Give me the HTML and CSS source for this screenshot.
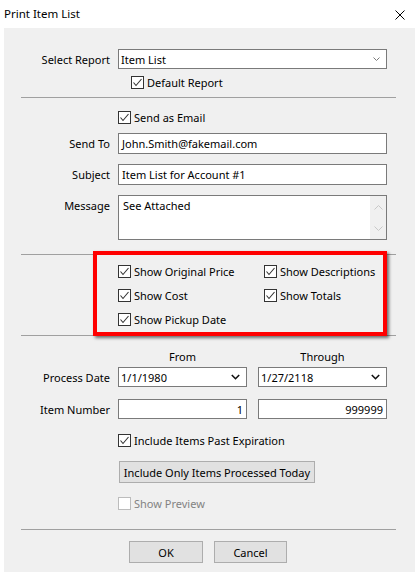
FILE: index.html
```html
<!DOCTYPE html>
<html>
<head>
    <link rel="stylesheet" href="styles.css">
</head>
<body>
    <div class="titlebar">
        <span class="title">Print Item List</span>
        <svg class="close" width="10" height="10" viewBox="0 0 10 10"><path d="M0.5 0.5L9.5 9.5M9.5 0.5L0.5 9.5" stroke="#000" stroke-width="1"/></svg>
    </div>

    <div class="panel">
        <div class="row first">
            <span class="lbl">Select Report</span>
            <div class="combo light">
                <span>Item List</span>
                <svg width="7" height="4" viewBox="0 0 7 4"><path d="M0.5 0.5L3.5 3.5L6.5 0.5" fill="none" stroke="#7a7a7a" stroke-width="1"/></svg>
            </div>
        </div>
        <div class="row cbrow gap7">
            <span></span>
            <label class="check indent"><span class="cb"><svg width="11" height="11" viewBox="0 0 11 11"><path d="M1.5 5.5L4 8.5L9.5 2" fill="none" stroke="#333" stroke-width="1.1"/></svg></span>Default Report</label>
        </div>

        <div class="sep gap8"></div>

        <div class="row cbrow gap13">
            <span></span>
            <label class="check"><span class="cb"><svg width="11" height="11" viewBox="0 0 11 11"><path d="M1.5 5.5L4 8.5L9.5 2" fill="none" stroke="#333" stroke-width="1.1"/></svg></span>Send as Email</label>
        </div>
        <div class="row gap9">
            <span class="lbl">Send To</span>
            <div class="field tall">John.Smith@fakemail.com</div>
        </div>
        <div class="row gap10">
            <span class="lbl">Subject</span>
            <div class="field tall">Item List for Account #1</div>
        </div>
        <div class="row top gap10">
            <span class="lbl msg-lbl">Message</span>
            <div class="memo">
                <span class="memo-text">See Attached</span>
                <div class="scroll">
                    <svg width="9" height="5" viewBox="0 0 9 5"><path d="M0.5 4.5L4.5 0.5L8.5 4.5" fill="none" stroke="#c8c8c8" stroke-width="1"/></svg>
                    <svg width="9" height="5" viewBox="0 0 9 5"><path d="M0.5 0.5L4.5 4.5L8.5 0.5" fill="none" stroke="#c8c8c8" stroke-width="1"/></svg>
                </div>
            </div>
        </div>

        <div class="sep gap14"></div>

        <div class="row gap10">
            <span></span>
            <div class="options">
                <label class="check"><span class="cb"><svg width="11" height="11" viewBox="0 0 11 11"><path d="M1.5 5.5L4 8.5L9.5 2" fill="none" stroke="#333" stroke-width="1.1"/></svg></span>Show Original Price</label>
                <label class="check"><span class="cb"><svg width="11" height="11" viewBox="0 0 11 11"><path d="M1.5 5.5L4 8.5L9.5 2" fill="none" stroke="#333" stroke-width="1.1"/></svg></span>Show Descriptions</label>
                <label class="check"><span class="cb"><svg width="11" height="11" viewBox="0 0 11 11"><path d="M1.5 5.5L4 8.5L9.5 2" fill="none" stroke="#333" stroke-width="1.1"/></svg></span>Show Cost</label>
                <label class="check"><span class="cb"><svg width="11" height="11" viewBox="0 0 11 11"><path d="M1.5 5.5L4 8.5L9.5 2" fill="none" stroke="#333" stroke-width="1.1"/></svg></span>Show Totals</label>
                <label class="check"><span class="cb"><svg width="11" height="11" viewBox="0 0 11 11"><path d="M1.5 5.5L4 8.5L9.5 2" fill="none" stroke="#333" stroke-width="1.1"/></svg></span>Show Pickup Date</label>
            </div>
        </div>

        <div class="sep gap9"></div>

        <div class="row gap13">
            <span></span>
            <div class="pair heads">
                <span>From</span>
                <span>Through</span>
            </div>
        </div>
        <div class="row gap3">
            <span class="lbl">Process Date</span>
            <div class="pair">
                <div class="combo dark">
                    <span>1/1/1980</span>
                    <svg width="9" height="6" viewBox="0 0 9 6"><path d="M0.8 1L4.5 4.7L8.2 1" fill="none" stroke="#111" stroke-width="1.6"/></svg>
                </div>
                <div class="combo dark">
                    <span>1/27/2118</span>
                    <svg width="9" height="6" viewBox="0 0 9 6"><path d="M0.8 1L4.5 4.7L8.2 1" fill="none" stroke="#111" stroke-width="1.6"/></svg>
                </div>
            </div>
        </div>
        <div class="row gap12">
            <span class="lbl">Item Number</span>
            <div class="pair">
                <div class="field num">1</div>
                <div class="field num">999999</div>
            </div>
        </div>
        <div class="row cbrow gap15">
            <span></span>
            <label class="check"><span class="cb"><svg width="11" height="11" viewBox="0 0 11 11"><path d="M1.5 5.5L4 8.5L9.5 2" fill="none" stroke="#333" stroke-width="1.1"/></svg></span>Include Items Past Expiration</label>
        </div>
        <div class="row gap14">
            <span></span>
            <div><button class="btn wide">Include Only Items Processed Today</button></div>
        </div>
        <div class="row cbrow gap14">
            <span></span>
            <label class="check disabled"><span class="cb"></span>Show Preview</label>
        </div>

        <div class="sep gap19"></div>

        <div class="actions">
            <button class="btn ok">OK</button>
            <button class="btn cancel">Cancel</button>
        </div>

        <div class="highlight"></div>
    </div>
</body>
</html>
```

FILE: styles.css
```css
body {
    margin: 0;
    background: #fff;
    font-family: "Noto Sans", sans-serif;
    font-size: 11px;
    color: #000;
}

.titlebar {
    height: 28px;
    display: flex;
    align-items: center;
    justify-content: space-between;
    padding: 0 12px 0 4px;
}

.title {
    font-size: 11.5px;
    margin-top: -1px;
}

.close {
    display: block;
    margin-top: 1px;
}

.panel {
    position: relative;
    margin: 0 2px 0 4px;
    height: 544px;
    background: #f0f0f0;
    display: flex;
    flex-direction: column;
}

.row {
    display: grid;
    grid-template-columns: 106px 269px;
    column-gap: 8px;
    align-items: center;
}

.row.top {
    align-items: start;
}

.first {
    margin-top: 21px;
}

.gap3 { margin-top: 3px; }
.gap7 { margin-top: 7px; }
.gap8 { margin-top: 8px; }
.gap9 { margin-top: 9px; }
.gap10 { margin-top: 10px; }
.gap12 { margin-top: 12px; }
.gap13 { margin-top: 13px; }
.gap14 { margin-top: 14px; }
.gap15 { margin-top: 15px; }
.gap19 { margin-top: 19px; }

.lbl {
    text-align: right;
    white-space: nowrap;
}

.msg-lbl {
    margin-top: 3px;
}

.sep {
    height: 1px;
    background: #a0a0a0;
    margin-left: 17px;
    width: 375px;
}

.combo {
    height: 20px;
    box-sizing: border-box;
    border: 1px solid #7a7a7a;
    background: #fff;
    display: flex;
    align-items: center;
    justify-content: space-between;
    padding: 0 6px 0 2px;
}

.combo svg {
    display: block;
}

.field {
    box-sizing: border-box;
    height: 20px;
    border: 1px solid #7a7a7a;
    background: #fff;
    padding: 0 3px;
    display: flex;
    align-items: center;
    white-space: nowrap;
}

.field.tall {
    height: 21px;
}

.field.num {
    justify-content: flex-end;
}

.memo {
    box-sizing: border-box;
    height: 45px;
    border: 1px solid #7a7a7a;
    background: #fff;
    display: flex;
    justify-content: space-between;
}

.memo-text {
    padding: 2px 0 0 4px;
}

.scroll {
    width: 16px;
    background: #f0f0f0;
    display: flex;
    flex-direction: column;
    align-items: center;
    justify-content: space-between;
    padding: 9px 0 8px;
    box-sizing: border-box;
}

.scroll svg {
    display: block;
}

.cbrow {
    height: 13px;
}

.check {
    display: flex;
    align-items: center;
    height: 13px;
    gap: 3px;
    white-space: nowrap;
}

.check.indent {
    margin-left: 13px;
}

.cb {
    width: 13px;
    height: 13px;
    box-sizing: border-box;
    border: 1px solid #333;
    background: #fff;
    flex: none;
    display: flex;
    align-items: center;
    justify-content: center;
}

.cb svg {
    display: block;
}

.check.disabled {
    color: #838383;
}

.check.disabled .cb {
    border-color: #bcbcbc;
}

.options {
    display: grid;
    grid-template-columns: 146px 1fr;
    row-gap: 11px;
}

.pair {
    display: grid;
    grid-template-columns: 129px 129px;
    column-gap: 11px;
}

.heads {
    height: 15px;
    line-height: 15px;
    text-align: center;
}

.btn {
    font-family: "Noto Sans", sans-serif;
    font-size: 11px;
    color: #000;
    height: 22px;
    background: #e1e1e1;
    border: 1px solid #adadad;
    padding: 0;
    display: block;
    white-space: nowrap;
}

.btn.wide {
    width: 196px;
    margin-left: 1px;
}

.actions {
    margin-top: 11px;
    display: flex;
    gap: 11px;
    padding-left: 125px;
}

.btn.ok {
    width: 74px;
}

.btn.cancel {
    width: 73px;
}

.highlight {
    position: absolute;
    left: 89px;
    top: 223px;
    width: 294px;
    height: 85px;
    box-sizing: border-box;
    border: 4px solid #ff0000;
    box-shadow: 2px 2px 3px rgba(0, 0, 0, 0.55);
}
```
